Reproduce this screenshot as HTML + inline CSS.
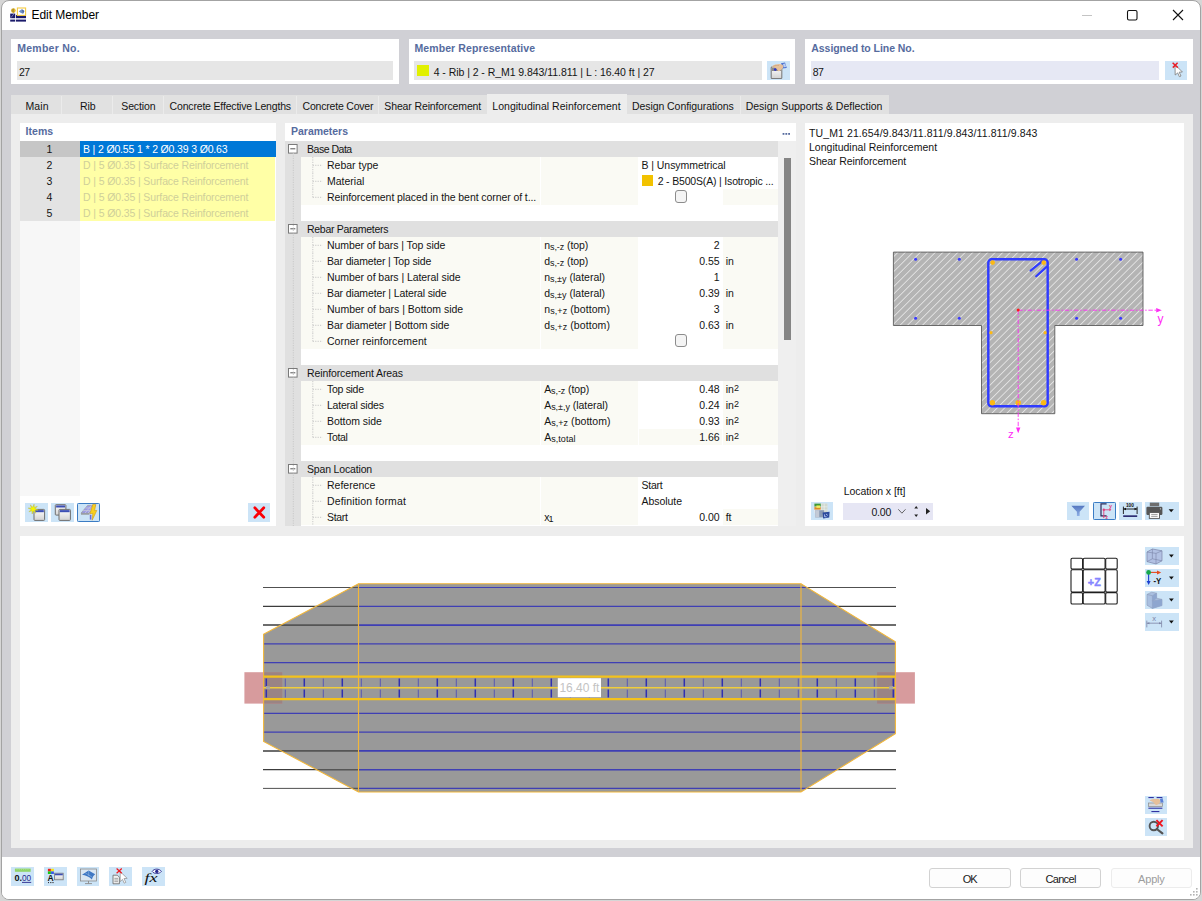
<!DOCTYPE html><html><head><meta charset="utf-8"><title>Edit Member</title><style>
html,body{margin:0;padding:0}
body{width:1202px;height:901px;overflow:hidden;background:#d6d6d6;font-family:"Liberation Sans",sans-serif;position:relative}
#w div,#w span.t,#w svg{position:absolute}
#w{position:absolute;left:1px;top:0;width:1198px;height:898px;border:1px solid #a3a3a3;border-radius:8px;background:#fff;overflow:hidden}
#c{position:absolute;left:-2px;top:-1px;width:1202px;height:901px}
span.t{white-space:pre;display:block}
sub,sup{font-size:9px;line-height:0;position:relative;vertical-align:baseline}
sub{top:1px}
sup{top:-2.5px}
</style></head><body><div id="w"><div id="c"><div style="left:0px;top:30px;width:1202px;height:827px;background:#d0d0d5;"></div><span id="t0" class="t" style="top:6.94px;font-size:12px;line-height:16px;color:#000;letter-spacing:-0.048px;left:31.5px;">Edit Member</span><svg style="left:1075px;top:5px" width="120" height="22" viewBox="1075 5 120 22"><line x1="1082" y1="15.5" x2="1092" y2="15.5" stroke="#c4c4c4" stroke-width="1"/><rect x="1127.5" y="10.5" width="9.5" height="9.5" rx="1.5" fill="none" stroke="#111" stroke-width="1.1"/><path d="M1173 10 L1183 20 M1183 10 L1173 20" stroke="#111" stroke-width="1.1" fill="none"/></svg><div style="left:11px;top:39px;width:387.5px;height:45px;background:#fff;"></div><span id="t1" class="t" style="top:40.36px;font-size:10.5px;line-height:16px;color:#566b9e;font-weight:700;letter-spacing:0.271px;left:17.2px;">Member No.</span><div style="left:17px;top:61.4px;width:376px;height:18.3px;background:#e6e6e6;"></div><span id="t2" class="t" style="top:63.56px;font-size:10.5px;line-height:16px;color:#141414;letter-spacing:-0.494px;left:19px;">27</span><div style="left:408.7px;top:39px;width:386.5px;height:45px;background:#fff;"></div><span id="t3" class="t" style="top:40.36px;font-size:10.5px;line-height:16px;color:#566b9e;font-weight:700;letter-spacing:0.111px;left:414.4px;">Member Representative</span><div style="left:414.2px;top:61.4px;width:348px;height:18.3px;background:#e6e6e6;"></div><div style="left:417.2px;top:65px;width:11.5px;height:11.3px;background:#e1f000;"></div><span id="t4" class="t" style="top:63.56px;font-size:10.5px;line-height:16px;color:#141414;letter-spacing:-0.050px;left:433.7px;">4 - Rib | 2 - R_M1 9.843/11.811 | L : 16.40 ft | 27</span><div style="left:767.2px;top:61.3px;width:22.8px;height:18.5px;background:#cce4f7;"></div><div style="left:805.2px;top:39px;width:388px;height:45px;background:#fff;"></div><span id="t5" class="t" style="top:40.36px;font-size:10.5px;line-height:16px;color:#566b9e;font-weight:700;letter-spacing:-0.061px;left:811.3px;">Assigned to Line No.</span><div style="left:811px;top:61.4px;width:348.2px;height:18.3px;background:#e6e8f4;"></div><span id="t6" class="t" style="top:63.56px;font-size:10.5px;line-height:16px;color:#141414;letter-spacing:-0.444px;left:812.7px;">87</span><div style="left:1164.8px;top:61.3px;width:22.4px;height:18.6px;background:#cce4f7;"></div><div style="left:11px;top:95.3px;width:877.5px;height:19px;background:#e1e1e1;"></div><div style="left:11px;top:114px;width:1181.5px;height:734.3px;background:#ededed;"></div><div style="left:486.5px;top:94px;width:140.3px;height:21px;background:#ededed;"></div><span id="t7" class="t" style="top:97.76px;font-size:10.5px;line-height:16px;color:#141414;letter-spacing:0.109px;left:25.5px;">Main</span><span id="t8" class="t" style="top:97.76px;font-size:10.5px;line-height:16px;color:#141414;letter-spacing:-0.122px;left:80.1px;">Rib</span><span id="t9" class="t" style="top:97.76px;font-size:10.5px;line-height:16px;color:#141414;letter-spacing:-0.133px;left:121.3px;">Section</span><span id="t10" class="t" style="top:97.76px;font-size:10.5px;line-height:16px;color:#141414;letter-spacing:-0.177px;left:169.6px;">Concrete Effective Lengths</span><span id="t11" class="t" style="top:97.76px;font-size:10.5px;line-height:16px;color:#141414;letter-spacing:-0.195px;left:302.5px;">Concrete Cover</span><span id="t12" class="t" style="top:97.76px;font-size:10.5px;line-height:16px;color:#141414;letter-spacing:-0.127px;left:384.3px;">Shear Reinforcement</span><span id="t13" class="t" style="top:97.76px;font-size:10.5px;line-height:16px;color:#141414;letter-spacing:0.021px;left:492.3px;">Longitudinal Reinforcement</span><span id="t14" class="t" style="top:97.76px;font-size:10.5px;line-height:16px;color:#141414;letter-spacing:-0.072px;left:632px;">Design Configurations</span><span id="t15" class="t" style="top:97.76px;font-size:10.5px;line-height:16px;color:#141414;letter-spacing:-0.016px;left:745.7px;">Design Supports &amp; Deflection</span><div style="left:61.3px;top:96px;width:1px;height:18px;background:#ebebeb;"></div><div style="left:111.8px;top:96px;width:1px;height:18px;background:#ebebeb;"></div><div style="left:163.1px;top:96px;width:1px;height:18px;background:#ebebeb;"></div><div style="left:296.4px;top:96px;width:1px;height:18px;background:#ebebeb;"></div><div style="left:377.5px;top:96px;width:1px;height:18px;background:#ebebeb;"></div><div style="left:739.5px;top:96px;width:1px;height:18px;background:#ebebeb;"></div><div style="left:20px;top:122.7px;width:255.5px;height:403.3px;background:#fff;"></div><span id="t16" class="t" style="top:123.36px;font-size:10.5px;line-height:16px;color:#566b9e;font-weight:700;letter-spacing:0.053px;left:25.5px;">Items</span><div style="left:20px;top:141px;width:59.5px;height:354.5px;background:#f7f7f7;"></div><div style="left:20px;top:141px;width:59.5px;height:80px;background:#f2f2f2;"></div><div style="left:80px;top:157px;width:195px;height:64px;background:#ffffd8;"></div><div style="left:20px;top:141px;width:59.5px;height:15.5px;background:#c6c6c6;"></div><span id="t17" class="t" style="top:140.56px;font-size:10.5px;line-height:16px;color:#141414;left:-100.5px;width:300px;text-align:center;">1</span><div style="left:80px;top:141px;width:195.5px;height:15.5px;background:#0078d7;"></div><span id="t18" class="t" style="top:140.66px;font-size:10.5px;line-height:16px;color:#fff;letter-spacing:-0.153px;left:83px;">B | 2 Ø0.55 1 * 2 Ø0.39 3 Ø0.63</span><div style="left:20px;top:157px;width:59.5px;height:15.5px;background:#e3e3e3;"></div><span id="t19" class="t" style="top:156.56px;font-size:10.5px;line-height:16px;color:#141414;left:-100.5px;width:300px;text-align:center;">2</span><div style="left:80px;top:157px;width:194.5px;height:15.5px;background:#ffffa6;"></div><span id="t20" class="t" style="top:156.66px;font-size:10.5px;line-height:16px;color:#cfcf9a;letter-spacing:-0.122px;left:83px;">D | 5 Ø0.35 | Surface Reinforcement</span><div style="left:20px;top:173px;width:59.5px;height:15.5px;background:#e3e3e3;"></div><span id="t21" class="t" style="top:172.56px;font-size:10.5px;line-height:16px;color:#141414;left:-100.5px;width:300px;text-align:center;">3</span><div style="left:80px;top:173px;width:194.5px;height:15.5px;background:#ffffa6;"></div><span id="t22" class="t" style="top:172.66px;font-size:10.5px;line-height:16px;color:#cfcf9a;letter-spacing:-0.122px;left:83px;">D | 5 Ø0.35 | Surface Reinforcement</span><div style="left:20px;top:189px;width:59.5px;height:15.5px;background:#e3e3e3;"></div><span id="t23" class="t" style="top:188.56px;font-size:10.5px;line-height:16px;color:#141414;left:-100.5px;width:300px;text-align:center;">4</span><div style="left:80px;top:189px;width:194.5px;height:15.5px;background:#ffffa6;"></div><span id="t24" class="t" style="top:188.66px;font-size:10.5px;line-height:16px;color:#cfcf9a;letter-spacing:-0.122px;left:83px;">D | 5 Ø0.35 | Surface Reinforcement</span><div style="left:20px;top:205px;width:59.5px;height:15.5px;background:#e3e3e3;"></div><span id="t25" class="t" style="top:204.56px;font-size:10.5px;line-height:16px;color:#141414;left:-100.5px;width:300px;text-align:center;">5</span><div style="left:80px;top:205px;width:194.5px;height:15.5px;background:#ffffa6;"></div><span id="t26" class="t" style="top:204.66px;font-size:10.5px;line-height:16px;color:#cfcf9a;letter-spacing:-0.122px;left:83px;">D | 5 Ø0.35 | Surface Reinforcement</span><div style="left:25px;top:503px;width:23px;height:18.8px;background:#cce4f7;"></div><div style="left:51.2px;top:503px;width:23px;height:18.8px;background:#cce4f7;"></div><div style="left:77px;top:503px;width:23px;height:18.8px;background:#cce4f7;"></div><div style="left:77px;top:503px;width:23px;height:18.8px;background:none;box-sizing:border-box;border:1px solid #3b7cc4;border-radius:1.5px"></div><div style="left:247.5px;top:503px;width:22.6px;height:18.8px;background:#cce4f7;"></div><div style="left:285.3px;top:122.7px;width:510.3px;height:403.3px;background:#fff;"></div><span id="t27" class="t" style="top:123.36px;font-size:10.5px;line-height:16px;color:#566b9e;font-weight:700;letter-spacing:-0.032px;left:291.1px;">Parameters</span><div style="left:285.3px;top:141px;width:16px;height:385px;background:#e0e0e0;"></div><div style="left:778.2px;top:141px;width:17.4px;height:385px;background:#efefef;"></div><div style="left:783.6px;top:158px;width:7.6px;height:182px;background:#858585;"></div><svg style="left:782px;top:131px" width="10" height="5"><g fill="#566b9e"><rect x="0.6" y="2" width="1.8" height="1.8"/><rect x="3.4" y="2" width="1.8" height="1.8"/><rect x="6.2" y="2" width="1.8" height="1.8"/></g></svg><div style="left:285.3px;top:141px;width:492.90000000000003px;height:15.7px;background:#e0e0e0;"></div><svg style="left:288px;top:144px" width="11" height="11"><rect x="0.5" y="0.5" width="8.6" height="8.6" fill="#fff" stroke="#7a7a7a"/><line x1="2.3" y1="4.8" x2="7.3" y2="4.8" stroke="#555" stroke-width="1"/></svg><span id="t28" class="t" style="top:141.36px;font-size:10.5px;line-height:16px;color:#141414;letter-spacing:-0.481px;left:307px;">Base Data</span><div style="left:301.2px;top:157px;width:239.20000000000002px;height:15.7px;background:#fafaf4;"></div><div style="left:541px;top:157px;width:97.00000000000003px;height:15.7px;background:#fafaf4;"></div><div style="left:638.6px;top:157px;width:139.60000000000002px;height:15.7px;background:#fff;"></div><svg style="left:311px;top:157px" width="13" height="16"><path d="M1.8 0 V16 M1.8 8.3 H11.5" stroke="#c9c9c9" stroke-width="1" stroke-dasharray="1.2 1.2" fill="none"/></svg><span id="t29" class="t" style="top:157.36px;font-size:10.5px;line-height:16px;color:#141414;left:327px;">Rebar type</span><span id="t30" class="t" style="top:157.36px;font-size:10.5px;line-height:16px;color:#141414;letter-spacing:-0.059px;left:641.5px;">B | Unsymmetrical</span><div style="left:301.2px;top:173px;width:239.20000000000002px;height:15.7px;background:#fafaf4;"></div><div style="left:541px;top:173px;width:97.00000000000003px;height:15.7px;background:#fafaf4;"></div><div style="left:638.6px;top:173px;width:139.60000000000002px;height:15.7px;background:#fff;"></div><svg style="left:311px;top:173px" width="13" height="16"><path d="M1.8 0 V16 M1.8 8.3 H11.5" stroke="#c9c9c9" stroke-width="1" stroke-dasharray="1.2 1.2" fill="none"/></svg><span id="t31" class="t" style="top:173.36px;font-size:10.5px;line-height:16px;color:#141414;left:327px;">Material</span><span id="t32" class="t" style="top:173.36px;font-size:10.5px;line-height:16px;color:#141414;letter-spacing:-0.172px;left:657.7px;">2 - B500S(A) | Isotropic ...</span><div style="left:641.6px;top:175px;width:11px;height:11px;background:#f2c200;"></div><div style="left:301.2px;top:189px;width:239.20000000000002px;height:15.7px;background:#fafaf4;"></div><div style="left:541px;top:189px;width:97.00000000000003px;height:15.7px;background:#fafaf4;"></div><div style="left:638.6px;top:189px;width:83.4px;height:15.7px;background:#fff;"></div><div style="left:722.6px;top:189px;width:55.60000000000002px;height:15.7px;background:#fafaf4;"></div><svg style="left:311px;top:189px" width="13" height="16"><path d="M1.8 0 V8.3 M1.8 8.3 H11.5" stroke="#c9c9c9" stroke-width="1" stroke-dasharray="1.2 1.2" fill="none"/></svg><span id="t33" class="t" style="top:189.36px;font-size:10.5px;line-height:16px;color:#141414;letter-spacing:-0.082px;left:327px;">Reinforcement placed in the bent corner of t...</span><div style="left:674.6px;top:190.2px;width:12.8px;height:12.8px;background:#f4f4f4;box-sizing:border-box;border:1px solid #8c8c8c;border-radius:3px"></div><div style="left:285.3px;top:221px;width:492.90000000000003px;height:15.7px;background:#e0e0e0;"></div><svg style="left:288px;top:224px" width="11" height="11"><rect x="0.5" y="0.5" width="8.6" height="8.6" fill="#fff" stroke="#7a7a7a"/><line x1="2.3" y1="4.8" x2="7.3" y2="4.8" stroke="#555" stroke-width="1"/></svg><span id="t34" class="t" style="top:221.36px;font-size:10.5px;line-height:16px;color:#141414;letter-spacing:-0.287px;left:307px;">Rebar Parameters</span><div style="left:301.2px;top:237px;width:239.20000000000002px;height:15.7px;background:#fafaf4;"></div><div style="left:541px;top:237px;width:97.00000000000003px;height:15.7px;background:#fafaf4;"></div><div style="left:638.6px;top:237px;width:83.4px;height:15.7px;background:#fff;"></div><div style="left:722.6px;top:237px;width:55.60000000000002px;height:15.7px;background:#fafaf4;"></div><svg style="left:311px;top:237px" width="13" height="16"><path d="M1.8 0 V16 M1.8 8.3 H11.5" stroke="#c9c9c9" stroke-width="1" stroke-dasharray="1.2 1.2" fill="none"/></svg><span id="t35" class="t" style="top:237.36px;font-size:10.5px;line-height:16px;color:#141414;letter-spacing:-0.066px;left:327px;">Number of bars | Top side</span><span id="t36" class="t" style="top:237.36px;font-size:10.5px;line-height:16px;color:#141414;letter-spacing:-0.078px;left:544.2px;">n<sub>s,-z</sub> (top)</span><span id="t37" class="t" style="top:237.36px;font-size:10.5px;line-height:16px;color:#141414;right:482.40px;">2</span><div style="left:301.2px;top:253px;width:239.20000000000002px;height:15.7px;background:#fafaf4;"></div><div style="left:541px;top:253px;width:97.00000000000003px;height:15.7px;background:#fafaf4;"></div><div style="left:638.6px;top:253px;width:83.4px;height:15.7px;background:#fff;"></div><div style="left:722.6px;top:253px;width:55.60000000000002px;height:15.7px;background:#fafaf4;"></div><svg style="left:311px;top:253px" width="13" height="16"><path d="M1.8 0 V16 M1.8 8.3 H11.5" stroke="#c9c9c9" stroke-width="1" stroke-dasharray="1.2 1.2" fill="none"/></svg><span id="t38" class="t" style="top:253.36px;font-size:10.5px;line-height:16px;color:#141414;letter-spacing:-0.148px;left:327px;">Bar diameter | Top side</span><span id="t39" class="t" style="top:253.36px;font-size:10.5px;line-height:16px;color:#141414;letter-spacing:-0.078px;left:544.2px;">d<sub>s,-z</sub> (top)</span><span id="t40" class="t" style="top:253.36px;font-size:10.5px;line-height:16px;color:#141414;right:482.40px;">0.55</span><span id="t41" class="t" style="top:253.36px;font-size:10.5px;line-height:16px;color:#141414;left:725.7px;">in</span><div style="left:301.2px;top:269px;width:239.20000000000002px;height:15.7px;background:#fafaf4;"></div><div style="left:541px;top:269px;width:97.00000000000003px;height:15.7px;background:#fafaf4;"></div><div style="left:638.6px;top:269px;width:83.4px;height:15.7px;background:#fff;"></div><div style="left:722.6px;top:269px;width:55.60000000000002px;height:15.7px;background:#fafaf4;"></div><svg style="left:311px;top:269px" width="13" height="16"><path d="M1.8 0 V16 M1.8 8.3 H11.5" stroke="#c9c9c9" stroke-width="1" stroke-dasharray="1.2 1.2" fill="none"/></svg><span id="t42" class="t" style="top:269.36px;font-size:10.5px;line-height:16px;color:#141414;letter-spacing:-0.059px;left:327px;">Number of bars | Lateral side</span><span id="t43" class="t" style="top:269.36px;font-size:10.5px;line-height:16px;color:#141414;letter-spacing:0.006px;left:544.2px;">n<sub>s,±y</sub> (lateral)</span><span id="t44" class="t" style="top:269.36px;font-size:10.5px;line-height:16px;color:#141414;right:482.40px;">1</span><div style="left:301.2px;top:285px;width:239.20000000000002px;height:15.7px;background:#fafaf4;"></div><div style="left:541px;top:285px;width:97.00000000000003px;height:15.7px;background:#fafaf4;"></div><div style="left:638.6px;top:285px;width:83.4px;height:15.7px;background:#fff;"></div><div style="left:722.6px;top:285px;width:55.60000000000002px;height:15.7px;background:#fafaf4;"></div><svg style="left:311px;top:285px" width="13" height="16"><path d="M1.8 0 V16 M1.8 8.3 H11.5" stroke="#c9c9c9" stroke-width="1" stroke-dasharray="1.2 1.2" fill="none"/></svg><span id="t45" class="t" style="top:285.36px;font-size:10.5px;line-height:16px;color:#141414;letter-spacing:-0.128px;left:327px;">Bar diameter | Lateral side</span><span id="t46" class="t" style="top:285.36px;font-size:10.5px;line-height:16px;color:#141414;letter-spacing:0.006px;left:544.2px;">d<sub>s,±y</sub> (lateral)</span><span id="t47" class="t" style="top:285.36px;font-size:10.5px;line-height:16px;color:#141414;right:482.40px;">0.39</span><span id="t48" class="t" style="top:285.36px;font-size:10.5px;line-height:16px;color:#141414;left:725.7px;">in</span><div style="left:301.2px;top:301px;width:239.20000000000002px;height:15.7px;background:#fafaf4;"></div><div style="left:541px;top:301px;width:97.00000000000003px;height:15.7px;background:#fafaf4;"></div><div style="left:638.6px;top:301px;width:83.4px;height:15.7px;background:#fff;"></div><div style="left:722.6px;top:301px;width:55.60000000000002px;height:15.7px;background:#fafaf4;"></div><svg style="left:311px;top:301px" width="13" height="16"><path d="M1.8 0 V16 M1.8 8.3 H11.5" stroke="#c9c9c9" stroke-width="1" stroke-dasharray="1.2 1.2" fill="none"/></svg><span id="t49" class="t" style="top:301.36px;font-size:10.5px;line-height:16px;color:#141414;letter-spacing:-0.006px;left:327px;">Number of bars | Bottom side</span><span id="t50" class="t" style="top:301.36px;font-size:10.5px;line-height:16px;color:#141414;letter-spacing:0.084px;left:544.2px;">n<sub>s,+z</sub> (bottom)</span><span id="t51" class="t" style="top:301.36px;font-size:10.5px;line-height:16px;color:#141414;right:482.40px;">3</span><div style="left:301.2px;top:317px;width:239.20000000000002px;height:15.7px;background:#fafaf4;"></div><div style="left:541px;top:317px;width:97.00000000000003px;height:15.7px;background:#fafaf4;"></div><div style="left:638.6px;top:317px;width:83.4px;height:15.7px;background:#fff;"></div><div style="left:722.6px;top:317px;width:55.60000000000002px;height:15.7px;background:#fafaf4;"></div><svg style="left:311px;top:317px" width="13" height="16"><path d="M1.8 0 V16 M1.8 8.3 H11.5" stroke="#c9c9c9" stroke-width="1" stroke-dasharray="1.2 1.2" fill="none"/></svg><span id="t52" class="t" style="top:317.36px;font-size:10.5px;line-height:16px;color:#141414;letter-spacing:-0.074px;left:327px;">Bar diameter | Bottom side</span><span id="t53" class="t" style="top:317.36px;font-size:10.5px;line-height:16px;color:#141414;letter-spacing:0.084px;left:544.2px;">d<sub>s,+z</sub> (bottom)</span><span id="t54" class="t" style="top:317.36px;font-size:10.5px;line-height:16px;color:#141414;right:482.40px;">0.63</span><span id="t55" class="t" style="top:317.36px;font-size:10.5px;line-height:16px;color:#141414;left:725.7px;">in</span><div style="left:301.2px;top:333px;width:239.20000000000002px;height:15.7px;background:#fafaf4;"></div><div style="left:541px;top:333px;width:97.00000000000003px;height:15.7px;background:#fafaf4;"></div><div style="left:638.6px;top:333px;width:83.4px;height:15.7px;background:#fff;"></div><div style="left:722.6px;top:333px;width:55.60000000000002px;height:15.7px;background:#fafaf4;"></div><svg style="left:311px;top:333px" width="13" height="16"><path d="M1.8 0 V8.3 M1.8 8.3 H11.5" stroke="#c9c9c9" stroke-width="1" stroke-dasharray="1.2 1.2" fill="none"/></svg><span id="t56" class="t" style="top:333.36px;font-size:10.5px;line-height:16px;color:#141414;letter-spacing:0.024px;left:327px;">Corner reinforcement</span><div style="left:674.6px;top:334.2px;width:12.8px;height:12.8px;background:#f4f4f4;box-sizing:border-box;border:1px solid #8c8c8c;border-radius:3px"></div><div style="left:285.3px;top:365px;width:492.90000000000003px;height:15.7px;background:#e0e0e0;"></div><svg style="left:288px;top:368px" width="11" height="11"><rect x="0.5" y="0.5" width="8.6" height="8.6" fill="#fff" stroke="#7a7a7a"/><line x1="2.3" y1="4.8" x2="7.3" y2="4.8" stroke="#555" stroke-width="1"/></svg><span id="t57" class="t" style="top:365.36px;font-size:10.5px;line-height:16px;color:#141414;letter-spacing:-0.109px;left:307px;">Reinforcement Areas</span><div style="left:301.2px;top:381px;width:239.20000000000002px;height:15.7px;background:#fafaf4;"></div><div style="left:541px;top:381px;width:97.00000000000003px;height:15.7px;background:#fafaf4;"></div><div style="left:638.6px;top:381px;width:83.4px;height:15.7px;background:#fff;"></div><div style="left:722.6px;top:381px;width:55.60000000000002px;height:15.7px;background:#fafaf4;"></div><svg style="left:311px;top:381px" width="13" height="16"><path d="M1.8 0 V16 M1.8 8.3 H11.5" stroke="#c9c9c9" stroke-width="1" stroke-dasharray="1.2 1.2" fill="none"/></svg><span id="t58" class="t" style="top:381.36px;font-size:10.5px;line-height:16px;color:#141414;letter-spacing:-0.301px;left:327px;">Top side</span><span id="t59" class="t" style="top:381.36px;font-size:10.5px;line-height:16px;color:#141414;letter-spacing:-0.094px;left:544.2px;">A<sub>s,-z</sub> (top)</span><span id="t60" class="t" style="top:381.36px;font-size:10.5px;line-height:16px;color:#141414;right:482.40px;">0.48</span><span id="t61" class="t" style="top:381.36px;font-size:10.5px;line-height:16px;color:#141414;left:725.7px;">in<sup>2</sup></span><div style="left:301.2px;top:397px;width:239.20000000000002px;height:15.7px;background:#fafaf4;"></div><div style="left:541px;top:397px;width:97.00000000000003px;height:15.7px;background:#fafaf4;"></div><div style="left:638.6px;top:397px;width:83.4px;height:15.7px;background:#fff;"></div><div style="left:722.6px;top:397px;width:55.60000000000002px;height:15.7px;background:#fafaf4;"></div><svg style="left:311px;top:397px" width="13" height="16"><path d="M1.8 0 V16 M1.8 8.3 H11.5" stroke="#c9c9c9" stroke-width="1" stroke-dasharray="1.2 1.2" fill="none"/></svg><span id="t62" class="t" style="top:397.36px;font-size:10.5px;line-height:16px;color:#141414;letter-spacing:-0.219px;left:327px;">Lateral sides</span><span id="t63" class="t" style="top:397.36px;font-size:10.5px;line-height:16px;color:#141414;letter-spacing:-0.043px;left:544.2px;">A<sub>s,±,y</sub> (lateral)</span><span id="t64" class="t" style="top:397.36px;font-size:10.5px;line-height:16px;color:#141414;right:482.40px;">0.24</span><span id="t65" class="t" style="top:397.36px;font-size:10.5px;line-height:16px;color:#141414;left:725.7px;">in<sup>2</sup></span><div style="left:301.2px;top:413px;width:239.20000000000002px;height:15.7px;background:#fafaf4;"></div><div style="left:541px;top:413px;width:97.00000000000003px;height:15.7px;background:#fafaf4;"></div><div style="left:638.6px;top:413px;width:83.4px;height:15.7px;background:#fff;"></div><div style="left:722.6px;top:413px;width:55.60000000000002px;height:15.7px;background:#fafaf4;"></div><svg style="left:311px;top:413px" width="13" height="16"><path d="M1.8 0 V16 M1.8 8.3 H11.5" stroke="#c9c9c9" stroke-width="1" stroke-dasharray="1.2 1.2" fill="none"/></svg><span id="t66" class="t" style="top:413.36px;font-size:10.5px;line-height:16px;color:#141414;letter-spacing:-0.068px;left:327px;">Bottom side</span><span id="t67" class="t" style="top:413.36px;font-size:10.5px;line-height:16px;color:#141414;letter-spacing:0.036px;left:544.2px;">A<sub>s,+z</sub> (bottom)</span><span id="t68" class="t" style="top:413.36px;font-size:10.5px;line-height:16px;color:#141414;right:482.40px;">0.93</span><span id="t69" class="t" style="top:413.36px;font-size:10.5px;line-height:16px;color:#141414;left:725.7px;">in<sup>2</sup></span><div style="left:301.2px;top:429px;width:239.20000000000002px;height:15.7px;background:#fafaf4;"></div><div style="left:541px;top:429px;width:97.00000000000003px;height:15.7px;background:#fafaf4;"></div><div style="left:638.6px;top:429px;width:83.4px;height:15.7px;background:#fafaf4;"></div><div style="left:722.6px;top:429px;width:55.60000000000002px;height:15.7px;background:#fafaf4;"></div><svg style="left:311px;top:429px" width="13" height="16"><path d="M1.8 0 V8.3 M1.8 8.3 H11.5" stroke="#c9c9c9" stroke-width="1" stroke-dasharray="1.2 1.2" fill="none"/></svg><span id="t70" class="t" style="top:429.36px;font-size:10.5px;line-height:16px;color:#141414;letter-spacing:-0.338px;left:327px;">Total</span><span id="t71" class="t" style="top:429.36px;font-size:10.5px;line-height:16px;color:#141414;letter-spacing:0.034px;left:544.2px;">A<sub>s,total</sub></span><span id="t72" class="t" style="top:429.36px;font-size:10.5px;line-height:16px;color:#141414;right:482.40px;">1.66</span><span id="t73" class="t" style="top:429.36px;font-size:10.5px;line-height:16px;color:#141414;left:725.7px;">in<sup>2</sup></span><div style="left:285.3px;top:461px;width:492.90000000000003px;height:15.7px;background:#e0e0e0;"></div><svg style="left:288px;top:464px" width="11" height="11"><rect x="0.5" y="0.5" width="8.6" height="8.6" fill="#fff" stroke="#7a7a7a"/><line x1="2.3" y1="4.8" x2="7.3" y2="4.8" stroke="#555" stroke-width="1"/></svg><span id="t74" class="t" style="top:461.36px;font-size:10.5px;line-height:16px;color:#141414;letter-spacing:-0.165px;left:307px;">Span Location</span><div style="left:301.2px;top:477px;width:239.20000000000002px;height:15.7px;background:#fafaf4;"></div><div style="left:541px;top:477px;width:97.00000000000003px;height:15.7px;background:#fafaf4;"></div><div style="left:638.6px;top:477px;width:139.60000000000002px;height:15.7px;background:#fff;"></div><svg style="left:311px;top:477px" width="13" height="16"><path d="M1.8 0 V16 M1.8 8.3 H11.5" stroke="#c9c9c9" stroke-width="1" stroke-dasharray="1.2 1.2" fill="none"/></svg><span id="t75" class="t" style="top:477.36px;font-size:10.5px;line-height:16px;color:#141414;left:327px;">Reference</span><span id="t76" class="t" style="top:477.36px;font-size:10.5px;line-height:16px;color:#141414;letter-spacing:-0.237px;left:641.5px;">Start</span><div style="left:301.2px;top:493px;width:239.20000000000002px;height:15.7px;background:#fafaf4;"></div><div style="left:541px;top:493px;width:97.00000000000003px;height:15.7px;background:#fafaf4;"></div><div style="left:638.6px;top:493px;width:139.60000000000002px;height:15.7px;background:#fff;"></div><svg style="left:311px;top:493px" width="13" height="16"><path d="M1.8 0 V16 M1.8 8.3 H11.5" stroke="#c9c9c9" stroke-width="1" stroke-dasharray="1.2 1.2" fill="none"/></svg><span id="t77" class="t" style="top:493.36px;font-size:10.5px;line-height:16px;color:#141414;letter-spacing:0.150px;left:327px;">Definition format</span><span id="t78" class="t" style="top:493.36px;font-size:10.5px;line-height:16px;color:#141414;letter-spacing:-0.047px;left:641.5px;">Absolute</span><div style="left:301.2px;top:509px;width:239.20000000000002px;height:15.7px;background:#fafaf4;"></div><div style="left:541px;top:509px;width:97.00000000000003px;height:15.7px;background:#fafaf4;"></div><div style="left:638.6px;top:509px;width:83.4px;height:15.7px;background:#fff;"></div><div style="left:722.6px;top:509px;width:55.60000000000002px;height:15.7px;background:#fafaf4;"></div><svg style="left:311px;top:509px" width="13" height="16"><path d="M1.8 0 V16 M1.8 8.3 H11.5" stroke="#c9c9c9" stroke-width="1" stroke-dasharray="1.2 1.2" fill="none"/></svg><span id="t79" class="t" style="top:509.36px;font-size:10.5px;line-height:16px;color:#141414;letter-spacing:-0.338px;left:327px;">Start</span><span id="t80" class="t" style="top:509.36px;font-size:10.5px;line-height:16px;color:#141414;letter-spacing:-0.983px;left:544.2px;">x<sub>1</sub></span><span id="t81" class="t" style="top:509.36px;font-size:10.5px;line-height:16px;color:#141414;right:482.40px;">0.00</span><span id="t82" class="t" style="top:509.36px;font-size:10.5px;line-height:16px;color:#141414;left:725.7px;">ft</span><svg style="left:292px;top:153px" width="3" height="373"><path d="M1.3 0 V373" stroke="#c9c9c9" stroke-width="1" stroke-dasharray="1.2 1.2" fill="none"/></svg><div style="left:805.2px;top:122.7px;width:379.2px;height:403.3px;background:#fff;"></div><span id="t83" class="t" style="top:125.06px;font-size:10.5px;line-height:16px;color:#141414;letter-spacing:0.103px;left:809px;">TU_M1 21.654/9.843/11.811/9.843/11.811/9.843</span><span id="t84" class="t" style="top:139.16px;font-size:10.5px;line-height:16px;color:#141414;letter-spacing:0.010px;left:809px;">Longitudinal Reinforcement</span><span id="t85" class="t" style="top:153.16px;font-size:10.5px;line-height:16px;color:#141414;letter-spacing:-0.117px;left:809px;">Shear Reinforcement</span><svg style="left:880px;top:240px" width="300" height="210" viewBox="880 240 300 210"><defs><pattern id="hat" patternUnits="userSpaceOnUse" width="5.3" height="5.3" patternTransform="rotate(-45 893 252)"><rect width="5.3" height="5.3" fill="#b4b4b4"/><rect y="0.9" width="5.3" height="0.85" fill="#e6e6e6"/></pattern></defs><polygon points="893.4,252.1 1143,252.1 1143,325.5 1054.8,325.5 1054.8,413.7 981.5,413.7 981.5,325.5 893.4,325.5" fill="url(#hat)" stroke="#5c5c5c" stroke-width="0.9"/><circle cx="915.6" cy="259.3" r="1.5" fill="#3a3aff"/><circle cx="915.6" cy="318.2" r="1.5" fill="#3a3aff"/><circle cx="959.3" cy="259.3" r="1.5" fill="#3a3aff"/><circle cx="959.3" cy="318.2" r="1.5" fill="#3a3aff"/><circle cx="1076.6" cy="259.3" r="1.5" fill="#3a3aff"/><circle cx="1076.6" cy="318.2" r="1.5" fill="#3a3aff"/><circle cx="1120.6" cy="259.3" r="1.5" fill="#3a3aff"/><circle cx="1120.6" cy="318.2" r="1.5" fill="#3a3aff"/><rect x="988.3" y="259.3" width="59.4" height="147" rx="3.2" fill="none" stroke="#2f3bff" stroke-width="2.4"/><path d="M1030.6 270.6 L1043.6 260.2 M1036.2 276.2 L1046.9 266.6" stroke="#2f3bff" stroke-width="2.2" stroke-linecap="round" fill="none"/><circle cx="992.7" cy="262.6" r="2.3" fill="#fdb913"/><circle cx="1043.7" cy="262.6" r="2.3" fill="#fdb913"/><circle cx="991" cy="332.7" r="1.6" fill="#fdb913"/><circle cx="1045.1" cy="332.7" r="1.6" fill="#fdb913"/><circle cx="992.4" cy="402.7" r="2.7" fill="#fdb913"/><circle cx="1018.2" cy="402.7" r="2.7" fill="#fdb913"/><circle cx="1043.6" cy="402.7" r="2.7" fill="#fdb913"/><path d="M1018.2 310.2 H1156.5 M1018.2 310.2 V428" stroke="#ff2cf5" stroke-width="0.9" stroke-dasharray="4.4 1.7 1.5 1.7" fill="none"/><path d="M1156.2 307.9 L1161.8 310.2 L1156.2 312.5Z M1016.0 427.5 L1018.2 433.2 L1020.4000000000001 427.5Z" fill="#ff2cf5"/><circle cx="1018.2" cy="310" r="1.5" fill="#ff1a1a"/><text x="1157.6" y="322.6" font-size="12" fill="#ff2cf5" font-family="Liberation Sans, sans-serif">y</text><text x="1008" y="437.5" font-size="11.5" fill="#ff2cf5" font-family="Liberation Sans, sans-serif">z</text></svg><span id="t86" class="t" style="top:483.36px;font-size:10.5px;line-height:16px;color:#141414;letter-spacing:-0.050px;left:843.7px;">Location x [ft]</span><div style="left:811px;top:502px;width:22px;height:18px;background:#cce4f7;"></div><div style="left:843.3px;top:502.5px;width:89.8px;height:17.7px;background:#e6e6f4;"></div><span id="t87" class="t" style="top:503.86px;font-size:10.5px;line-height:16px;color:#141414;letter-spacing:-0.234px;left:871.5px;">0.00</span><svg style="left:895px;top:503px" width="40" height="17" viewBox="895 503 40 17"><path d="M898.3 509.3 L901.9 513.2 L905.5 509.3" fill="none" stroke="#555" stroke-width="0.9"/><path d="M914.3 508.6 L916.2 506 L918.1 508.6Z M914.3 514.4 L916.2 517 L918.1 514.4Z M926 508 L930.2 511.2 L926 514.4Z" fill="#222"/></svg><div style="left:1067px;top:502.1px;width:22px;height:18px;background:#cce4f7;"></div><div style="left:1092.8px;top:502.1px;width:22.8px;height:18px;background:#cce4f7;"></div><div style="left:1119px;top:502.1px;width:22.5px;height:18px;background:#cce4f7;"></div><div style="left:1145px;top:502.1px;width:34px;height:18px;background:#cce4f7;"></div><div style="left:1092.8px;top:502.1px;width:22.8px;height:18px;background:none;box-sizing:border-box;border:1px solid #3b7cc4;border-radius:1.5px"></div><div style="left:20px;top:535.8px;width:1164.3px;height:304.5px;background:#fff;"></div><svg style="left:230px;top:570px" width="700" height="240" viewBox="230 570 700 240"><defs><clipPath id="bp"><polygon points="263.6,634.3 358.5,583.8 801,583.8 895.4,641.8 895.4,733.8 801,792 358.5,792 263.6,741.4"/></clipPath></defs><line x1="263" y1="587.5" x2="896" y2="587.5" stroke="#3c3c3c" stroke-width="0.9"/><line x1="263" y1="606.4" x2="896" y2="606.4" stroke="#3c3c3c" stroke-width="1.2"/><line x1="263" y1="625.1" x2="896" y2="625.1" stroke="#3c3c3c" stroke-width="1.5"/><line x1="263" y1="750.9" x2="896" y2="750.9" stroke="#3c3c3c" stroke-width="1.5"/><line x1="263" y1="769.7" x2="896" y2="769.7" stroke="#3c3c3c" stroke-width="1.2"/><line x1="263" y1="788.4" x2="896" y2="788.4" stroke="#3c3c3c" stroke-width="0.9"/><polygon points="263.6,634.3 358.5,583.8 801,583.8 895.4,641.8 895.4,733.8 801,792 358.5,792 263.6,741.4" fill="#999999"/><g clip-path="url(#bp)"><line x1="263" y1="587.5" x2="358.5" y2="587.5" stroke="#555" stroke-width="1.1"/><line x1="358.5" y1="587.5" x2="896" y2="587.5" stroke="#3f3fb4" stroke-width="1.1"/><line x1="263" y1="606.4" x2="358.5" y2="606.4" stroke="#555" stroke-width="1.4"/><line x1="358.5" y1="606.4" x2="896" y2="606.4" stroke="#3f3fb4" stroke-width="1.4"/><line x1="263" y1="625.1" x2="358.5" y2="625.1" stroke="#555" stroke-width="1.7"/><line x1="358.5" y1="625.1" x2="896" y2="625.1" stroke="#3f3fb4" stroke-width="1.7"/><line x1="263" y1="643.8" x2="896" y2="643.8" stroke="#3f3fb4" stroke-width="1.3"/><line x1="263" y1="662.6" x2="896" y2="662.6" stroke="#3f3fb4" stroke-width="1.1"/><line x1="263" y1="713.4" x2="896" y2="713.4" stroke="#3f3fb4" stroke-width="1.1"/><line x1="263" y1="732.2" x2="896" y2="732.2" stroke="#3f3fb4" stroke-width="1.3"/><line x1="263" y1="750.9" x2="358.5" y2="750.9" stroke="#555" stroke-width="1.7"/><line x1="358.5" y1="750.9" x2="896" y2="750.9" stroke="#3f3fb4" stroke-width="1.7"/><line x1="263" y1="769.7" x2="358.5" y2="769.7" stroke="#555" stroke-width="1.4"/><line x1="358.5" y1="769.7" x2="896" y2="769.7" stroke="#3f3fb4" stroke-width="1.4"/><line x1="263" y1="788.4" x2="358.5" y2="788.4" stroke="#555" stroke-width="1.1"/><line x1="358.5" y1="788.4" x2="896" y2="788.4" stroke="#3f3fb4" stroke-width="1.1"/></g><rect x="244.4" y="672.2" width="37.8" height="31.4" fill="#d08a8c" fill-opacity="0.85"/><rect x="877.1" y="672.2" width="37.8" height="31.4" fill="#d08a8c" fill-opacity="0.85"/><rect x="263.6" y="672.2" width="18.599999999999966" height="31.4" fill="#9a8484"/><rect x="877.1" y="672.2" width="18.299999999999955" height="31.4" fill="#9a8484"/><polygon points="263.6,634.3 358.5,583.8 801,583.8 895.4,641.8 895.4,733.8 801,792 358.5,792 263.6,741.4" fill="none" stroke="#f2b73a" stroke-width="1.1"/><path d="M358.5 583.8 V792 M801 583.8 V792" stroke="#f2b73a" stroke-width="1.1" fill="none"/><path d="M266.3 678.6 V686.6 M266.3 689.6 V697.6" stroke="#3030b0" stroke-width="1.5" fill="none"/><path d="M285.3 678.6 V686.6 M285.3 689.6 V697.6" stroke="#4848b8" stroke-width="0.8" fill="none"/><path d="M304.3 678.6 V686.6 M304.3 689.6 V697.6" stroke="#3030b0" stroke-width="1.5" fill="none"/><path d="M323.3 678.6 V686.6 M323.3 689.6 V697.6" stroke="#4848b8" stroke-width="0.8" fill="none"/><path d="M342.3 678.6 V686.6 M342.3 689.6 V697.6" stroke="#3030b0" stroke-width="1.5" fill="none"/><path d="M361.3 678.6 V686.6 M361.3 689.6 V697.6" stroke="#4848b8" stroke-width="0.8" fill="none"/><path d="M380.3 678.6 V686.6 M380.3 689.6 V697.6" stroke="#4848b8" stroke-width="0.8" fill="none"/><path d="M399.3 678.6 V686.6 M399.3 689.6 V697.6" stroke="#3030b0" stroke-width="1.5" fill="none"/><path d="M418.3 678.6 V686.6 M418.3 689.6 V697.6" stroke="#4848b8" stroke-width="0.8" fill="none"/><path d="M437.3 678.6 V686.6 M437.3 689.6 V697.6" stroke="#3030b0" stroke-width="1.5" fill="none"/><path d="M456.3 678.6 V686.6 M456.3 689.6 V697.6" stroke="#4848b8" stroke-width="0.8" fill="none"/><path d="M475.3 678.6 V686.6 M475.3 689.6 V697.6" stroke="#3030b0" stroke-width="1.5" fill="none"/><path d="M494.3 678.6 V686.6 M494.3 689.6 V697.6" stroke="#4848b8" stroke-width="0.8" fill="none"/><path d="M513.3 678.6 V686.6 M513.3 689.6 V697.6" stroke="#3030b0" stroke-width="1.5" fill="none"/><path d="M532.3 678.6 V686.6 M532.3 689.6 V697.6" stroke="#4848b8" stroke-width="0.8" fill="none"/><path d="M551.3 678.6 V686.6 M551.3 689.6 V697.6" stroke="#3030b0" stroke-width="1.5" fill="none"/><path d="M570.3 678.6 V686.6 M570.3 689.6 V697.6" stroke="#4848b8" stroke-width="0.8" fill="none"/><path d="M589.3 678.6 V686.6 M589.3 689.6 V697.6" stroke="#4848b8" stroke-width="0.8" fill="none"/><path d="M608.3 678.6 V686.6 M608.3 689.6 V697.6" stroke="#3030b0" stroke-width="1.5" fill="none"/><path d="M627.3 678.6 V686.6 M627.3 689.6 V697.6" stroke="#4848b8" stroke-width="0.8" fill="none"/><path d="M646.3 678.6 V686.6 M646.3 689.6 V697.6" stroke="#3030b0" stroke-width="1.5" fill="none"/><path d="M665.3 678.6 V686.6 M665.3 689.6 V697.6" stroke="#4848b8" stroke-width="0.8" fill="none"/><path d="M684.3 678.6 V686.6 M684.3 689.6 V697.6" stroke="#3030b0" stroke-width="1.5" fill="none"/><path d="M703.3 678.6 V686.6 M703.3 689.6 V697.6" stroke="#4848b8" stroke-width="0.8" fill="none"/><path d="M722.3 678.6 V686.6 M722.3 689.6 V697.6" stroke="#3030b0" stroke-width="1.5" fill="none"/><path d="M741.3 678.6 V686.6 M741.3 689.6 V697.6" stroke="#4848b8" stroke-width="0.8" fill="none"/><path d="M760.3 678.6 V686.6 M760.3 689.6 V697.6" stroke="#3030b0" stroke-width="1.5" fill="none"/><path d="M779.3 678.6 V686.6 M779.3 689.6 V697.6" stroke="#4848b8" stroke-width="0.8" fill="none"/><path d="M798.3 678.6 V686.6 M798.3 689.6 V697.6" stroke="#4848b8" stroke-width="0.8" fill="none"/><path d="M817.3 678.6 V686.6 M817.3 689.6 V697.6" stroke="#3030b0" stroke-width="1.5" fill="none"/><path d="M836.3 678.6 V686.6 M836.3 689.6 V697.6" stroke="#4848b8" stroke-width="0.8" fill="none"/><path d="M855.3 678.6 V686.6 M855.3 689.6 V697.6" stroke="#3030b0" stroke-width="1.5" fill="none"/><path d="M874.3 678.6 V686.6 M874.3 689.6 V697.6" stroke="#4848b8" stroke-width="0.8" fill="none"/><path d="M893.3 678.6 V686.6 M893.3 689.6 V697.6" stroke="#3030b0" stroke-width="1.5" fill="none"/><path d="M263.6 676.7 H895.4 M263.6 699.1 H895.4" stroke="#f3c21c" stroke-width="2.2" fill="none"/><path d="M263.6 687.8 H895.4" stroke="#f0cd3a" stroke-width="1.5" fill="none"/><path d="M266 686 L270 686.6 L270 689.4 L266 689Z M889 686.6 L893 686 L893 689 L889 689.4Z" fill="#a5a5a5"/><rect x="557.8" y="678.2" width="43.2" height="19" fill="#fff"/><text x="579.4" y="692.3" text-anchor="middle" font-size="12" fill="#c3c3c3" font-family="Liberation Sans, sans-serif">16.40 ft</text></svg><div style="left:1145px;top:546.5px;width:33.8px;height:18.4px;background:#cce4f7;"></div><div style="left:1145px;top:568.7px;width:33.8px;height:18.4px;background:#cce4f7;"></div><div style="left:1145px;top:590.5px;width:33.8px;height:18.4px;background:#cce4f7;"></div><div style="left:1145px;top:612.5px;width:33.8px;height:18.4px;background:#cce4f7;"></div><div style="left:1145px;top:796px;width:22px;height:18px;background:#cce4f7;"></div><div style="left:1145px;top:818px;width:22px;height:18px;background:#cce4f7;"></div><div style="left:0px;top:856.8px;width:1202px;height:45px;background:#fff;"></div><div style="left:11px;top:867.2px;width:22.8px;height:18.6px;background:#cce4f7;"></div><div style="left:44px;top:867.2px;width:22.8px;height:18.6px;background:#cce4f7;"></div><div style="left:76.7px;top:867.2px;width:22.8px;height:18.6px;background:#cce4f7;"></div><div style="left:109.3px;top:867.2px;width:22.8px;height:18.6px;background:#cce4f7;"></div><div style="left:142.2px;top:867.2px;width:22.8px;height:18.6px;background:#cce4f7;"></div><div style="left:929px;top:867.8px;width:81.5px;height:20.5px;background:#fdfdfd;box-sizing:border-box;border:1px solid #d2d2d2;border-radius:3px"></div><span id="t88" class="t" style="top:871.39px;font-size:11px;line-height:16px;color:#1a1a1a;letter-spacing:-0.903px;left:962.7px;">OK</span><div style="left:1020.4px;top:867.8px;width:80.8px;height:20.5px;background:#fdfdfd;box-sizing:border-box;border:1px solid #d2d2d2;border-radius:3px"></div><span id="t89" class="t" style="top:871.39px;font-size:11px;line-height:16px;color:#1a1a1a;letter-spacing:-0.658px;left:1045.4px;">Cancel</span><div style="left:1110.6px;top:867.8px;width:81px;height:20.5px;background:#fdfdfd;box-sizing:border-box;border:1px solid #ececec;border-radius:3px"></div><span id="t90" class="t" style="top:871.39px;font-size:11px;line-height:16px;color:#9c9c9c;letter-spacing:-0.186px;left:1138.1px;">Apply</span><svg style="left:1188px;top:886px" width="12" height="12"><g fill="#b4b4b4"><rect x="8" y="2" width="1.6" height="1.6"/><rect x="5" y="5" width="1.6" height="1.6"/><rect x="8" y="5" width="1.6" height="1.6"/><rect x="2" y="8" width="1.6" height="1.6"/><rect x="5" y="8" width="1.6" height="1.6"/><rect x="8" y="8" width="1.6" height="1.6"/></g></svg><svg style="left:0px;top:0px" width="1" height="1" viewBox="0 0 1 1"><defs><linearGradient id="wg" x1="0" y1="0" x2="0" y2="1"><stop offset="0" stop-color="#ffffff"/><stop offset="1" stop-color="#d2d2d2"/></linearGradient><linearGradient id="fg" x1="0" y1="0" x2="0" y2="1"><stop offset="0" stop-color="#5577c0"/><stop offset="1" stop-color="#8fb0e6"/></linearGradient></defs></svg><svg style="left:10px;top:7px" width="17" height="16" viewBox="0 0 17 16"><circle cx="3.4" cy="3.6" r="2.3" fill="#e3b62c"/><path d="M3.4 1.6 V5.6 M2.3 2.2 V5" stroke="#8d7a2a" stroke-width="0.6"/><rect x="0.2" y="6.6" width="5" height="4.6" fill="#1a1a6a"/><rect x="6" y="8" width="10" height="3.2" fill="#1a1a6a"/><path d="M1 10.6 L3.8 7" stroke="#8f8fc0" stroke-width="0.8"/><rect x="0.2" y="12.6" width="5" height="2" fill="#1a1a6a"/><rect x="6" y="12.6" width="10" height="2" fill="#1a1a6a"/><rect x="7.4" y="1" width="8.2" height="7.4" fill="#fff" stroke="#f4cb42" stroke-width="1.1"/><path d="M8.8 4.2 L11.8 2.2 L14.4 4 L13 6.8 L10.6 5.8Z" fill="#6f8fc8"/><path d="M11.8 2.2 L14.4 4 L13 6.8Z" fill="#50689c"/></svg><svg style="left:767px;top:61px" width="23" height="19" viewBox="0 0 23 19"><rect x="4.2" y="6" width="10.6" height="11.5" rx="0.8" fill="url(#wg)" stroke="#7c7c7c" stroke-width="1.1"/><rect x="4.8" y="6.6" width="9.4" height="3.4" fill="#8a8a8a"/><circle cx="8.2" cy="8.6" r="1.3" fill="#3036c8"/><path d="M14 2.2 L18 1.4 L19.8 7 L15 7.6Z" fill="#4f74cf"/><path d="M16 3 L18.2 2.6 L19 6 L16.6 6.2Z" fill="#b9cdf2"/><path d="M5 6.2 C5.4 4 8.6 3.2 11 3.2 C13.6 2.8 16 3.4 16.2 5.4 C16.4 7.4 14.4 8.2 13.2 9.6 C12.4 10.6 10.8 10.4 10.4 9 C10 7.4 8.4 6.4 5 6.2Z" fill="#e6c09a"/><path d="M6.2 5.4 C8 4.4 10.4 4.2 12 4.4" stroke="#c39a72" stroke-width="0.6" fill="none"/></svg><svg style="left:1164.8px;top:61.3px" width="23" height="19" viewBox="0 0 23 19"><path d="M10 3.6 L17.4 11 L14.2 11.2 L16 15 L14.4 15.7 L12.7 11.9 L10.2 14Z" fill="#fff" stroke="#7a7a7a" stroke-width="0.8" stroke-linejoin="round"/><path d="M7.6 1.8 L12.8 6.6 M12.6 1.8 L7.8 6.6" stroke="#e8202a" stroke-width="1.5" fill="none"/></svg><svg style="left:25px;top:503px" width="23" height="19" viewBox="0 0 23 19"><rect x="9" y="6.4" width="10.6" height="11" rx="0.8" fill="url(#wg)" stroke="#6e6e6e" stroke-width="1"/><rect x="9.8" y="7.1000000000000005" width="9.0" height="2.1" fill="#3c4fb4"/><polygon points="9.09,1.20 9.22,4.44 12.27,3.34 10.06,5.72 13.00,7.09 9.76,7.22 10.86,10.27 8.48,8.06 7.11,11.00 6.98,7.76 3.93,8.86 6.14,6.48 3.20,5.11 6.44,4.98 5.34,1.93 7.72,4.14" fill="#f6f600" stroke="#b9b94a" stroke-width="0.5"/></svg><svg style="left:51.2px;top:503px" width="23" height="19" viewBox="0 0 23 19"><rect x="4.3" y="1.7" width="10.6" height="10.4" rx="0.8" fill="url(#wg)" stroke="#6e6e6e" stroke-width="1"/><rect x="5.1" y="2.4" width="9.0" height="2.1" fill="#3c4fb4"/><rect x="8" y="6.4" width="11.4" height="11" rx="0.8" fill="url(#wg)" stroke="#6e6e6e" stroke-width="1"/><rect x="8.8" y="7.1000000000000005" width="9.8" height="2.1" fill="#3c4fb4"/></svg><svg style="left:77px;top:503px" width="23" height="19" viewBox="0 0 23 19"><path d="M4 10.2 L10.6 2.4 L18.6 2.4 L12.4 10.2Z" fill="#9a9ae8" stroke="#9a9a9a" stroke-width="0.7"/><path d="M6.2 7.6 H14.4 M8.4 5 H16.6 M8 10.2 L14.4 2.4 M11 10.2 L17 2.4" stroke="#c9c9d8" stroke-width="0.8" fill="none"/><path d="M4 10.4 H12.4 V11.6 H4Z" fill="#8c8c8c"/><path d="M15.8 1.4 L18.8 1.4 L17.6 7.6 L19.8 7.4 L15.2 17.2 L15.8 10.4 L13 10.8Z" fill="#f7cf1d" stroke="#d19a12" stroke-width="0.6" stroke-linejoin="round"/><path d="M13.6 11.8 V16.6" stroke="#6a6ad8" stroke-width="1.6"/></svg><svg style="left:247.5px;top:503px" width="23" height="19" viewBox="0 0 23 19"><path d="M6.8 4.8 L15.8 14.2 M15.8 4.8 L6.8 14.2" stroke="#fb0007" stroke-width="2.7" stroke-linecap="round" fill="none"/></svg><svg style="left:811px;top:502px" width="22" height="18" viewBox="0 0 22 18"><rect x="3.4" y="1.6" width="13" height="9.6" fill="#e8e8e8"/><rect x="3.4" y="1.6" width="6.6" height="3.2" fill="#3c9a3c"/><rect x="3.4" y="4.8" width="6.6" height="3" fill="#d98c2a"/><rect x="5.4" y="3.4" width="3.6" height="2.6" fill="#e9e13a"/><rect x="10" y="1.6" width="6.4" height="9.6" fill="#c9d4c9" fill-opacity="0.8"/><path d="M10 1.6 V11.2 M13.2 1.6 V11.2 M3.4 4.8 H16.4 M3.4 8 H16.4" stroke="#fff" stroke-width="0.5" stroke-opacity="0.8"/><rect x="4.2" y="8.2" width="9" height="7.2" fill="#8b9bb4"/><rect x="4.2" y="8.2" width="4" height="7.2" fill="#c3cad6"/><path d="M11.6 10.6 L18.6 9.8 L18.2 15.6 L12.2 16.6Z" fill="#2b4a9c"/><path d="M13.6 12.4 V14.8 H15.6 M15 12 L16.8 13.4" stroke="#c9d8ff" stroke-width="0.8" fill="none"/></svg><svg style="left:1067px;top:502.1px" width="22" height="18" viewBox="0 0 22 18"><path d="M4.4 3.8 H18 L12.6 9.8 V14 L9.9 14 V9.8Z" fill="url(#fg)"/></svg><svg style="left:1092.8px;top:502.1px" width="23" height="18" viewBox="0 0 23 18"><path d="M13.6 1.8 H8 V13.8 H13.6" fill="none" stroke="#2a2a5a" stroke-width="1.2"/><path d="M10.8 7.8 H17.2 M10.8 7.8 V15.2" stroke="#e0417d" stroke-width="0.9" fill="none"/><path d="M16.4 6.4 L18.4 7.8 L16.4 9.2Z M9.6 14.2 L10.8 16.2 L12 14.2Z" fill="#e0417d"/><circle cx="10.8" cy="7.8" r="1.2" fill="#e0417d"/><text x="16" y="5.6" font-size="5.4" font-weight="700" fill="#e0417d" font-family="Liberation Sans, sans-serif">y</text><text x="12.6" y="16.6" font-size="5" font-weight="700" fill="#e0417d" font-family="Liberation Sans, sans-serif">z</text></svg><svg style="left:1119px;top:502.1px" width="22.5" height="18" viewBox="0 0 22.5 18"><text x="10.9" y="5.2" text-anchor="middle" font-size="4.8" font-weight="700" fill="#111" font-family="Liberation Sans, sans-serif">100</text><path d="M4.4 4.6 V12 M18.1 4.6 V12 M4.4 7 H18.1" stroke="#111" stroke-width="0.9" fill="none"/><path d="M4.4 7 L7 5.8 V8.2Z M18.1 7 L15.5 5.8 V8.2Z" fill="#111"/><rect x="4.2" y="13.3" width="14" height="1.7" fill="#2e2e74"/></svg><svg style="left:1145px;top:502.1px" width="34" height="18" viewBox="0 0 34 18"><rect x="4.8" y="0.6" width="9.4" height="3.6" fill="#6e6e6e"/><rect x="1.4" y="4.8" width="16" height="8.2" rx="1.2" fill="#565656"/><circle cx="15.4" cy="6.8" r="0.6" fill="#d8d8d8"/><rect x="4.3" y="10.6" width="10.2" height="5.8" fill="#fff" stroke="#565656" stroke-width="0.9"/><path d="M6.2 12.6 H12.6 M6.2 14.4 H12.6" stroke="#777" stroke-width="0.7"/><path d="M23.6 7.2 H28.8 L26.2 10.3Z" fill="#111"/></svg><svg style="left:1145px;top:546.5px" width="34" height="18.4" viewBox="0 0 34 18.4"><path d="M2 5 L7.4 2 L17 3.8 L17 13.8 L11 17 L2 14.6Z" fill="#aab5dc" fill-opacity="0.75" stroke="#7b84a8" stroke-width="0.7" stroke-linejoin="round"/><path d="M2 5 L11 6.4 L17 3.8 M11 6.4 V17 M7.4 2 V11.8 L2 14.6 M7.4 11.8 L17 13.8" fill="none" stroke="#7b84a8" stroke-width="0.6"/><path d="M24 7.6 H28.8 L26.4 10.4Z" fill="#111"/></svg><svg style="left:1145px;top:568.7px" width="34" height="18.4" viewBox="0 0 34 18.4"><path d="M3.6 3.4 H13" stroke="#e84a1c" stroke-width="1.1"/><path d="M12 1.4 L16.2 3.4 L12 5.4Z" fill="#e84a1c"/><path d="M3.6 3.4 V13" stroke="#1b3fd0" stroke-width="1.1"/><path d="M1.6 12 L3.6 16 L5.6 12Z" fill="#1b3fd0"/><circle cx="3.6" cy="3.4" r="2.4" fill="#14a84a"/><text x="8.4" y="14.6" font-size="8.6" font-weight="700" fill="#111" font-family="Liberation Sans, sans-serif" textLength="7.8" lengthAdjust="spacingAndGlyphs">-Y</text><path d="M24 7.6 H28.8 L26.4 10.4Z" fill="#111"/></svg><svg style="left:1145px;top:590.5px" width="34" height="18.4" viewBox="0 0 34 18.4"><path d="M2 3.4 L6.6 1.2 L11.6 2.2 V7.2 L17 8.4 V14.6 L7.4 17.4 L2 14.2Z" fill="#a9bfe0" stroke="#8d9bb8" stroke-width="0.6" stroke-linejoin="round"/><path d="M2 3.4 L7.4 4.8 L11.6 2.2 M7.4 4.8 V10 L11.6 7.2 M7.4 10 L17 8.4 M7.4 10 V17.4" fill="none" stroke="#8d9bb8" stroke-width="0.6"/><path d="M7.4 4.8 L11.6 2.2 V7.2 L7.4 10Z M7.4 10 L17 8.4 V14.6 L7.4 17.4Z" fill="#8ea6cf"/><path d="M24 7.6 H28.8 L26.4 10.4Z" fill="#111"/></svg><svg style="left:1145px;top:612.5px" width="34" height="18.4" viewBox="0 0 34 18.4"><text x="9.2" y="7.6" text-anchor="middle" font-size="7.6" fill="#7d84a6" font-family="Liberation Sans, sans-serif">x</text><path d="M1.8 7.6 V14.4 M16.6 7.6 V14.4 M1.8 10.2 H16.6" stroke="#7d84a6" stroke-width="0.8" fill="none"/><path d="M1.8 10.2 L4.4 9.2 V11.2Z M16.6 10.2 L14 9.2 V11.2Z" fill="#7d84a6"/><path d="M24 7.6 H28.8 L26.4 10.4Z" fill="#111"/></svg><svg style="left:1145px;top:796px" width="22" height="18" viewBox="0 0 22 18"><path d="M3.4 1.6 H8.8 M11.6 1.6 H17.4 M3.4 12.2 H17.4 M6.4 15.6 H14.4" stroke="#20209a" stroke-width="1" fill="none"/><rect x="3.4" y="7" width="14" height="3.4" fill="#d9d9d9" stroke="#8a8a8a" stroke-width="0.7"/><path d="M4.6 4.6 C6 3 9.4 2.8 11.4 3 C13.4 2.4 15 3.4 15.2 5 C15.4 6.6 14 7.8 12.6 8.6 C11.4 9.2 9.8 8.8 9.4 7.6 C8.6 6.2 6.8 5.6 4.6 4.6Z" fill="#e6c09a"/><path d="M15 3 L17.6 2.2 L18.6 6.4 L15.6 6.6Z" fill="#5b7fd6"/></svg><svg style="left:1145px;top:818px" width="22" height="18" viewBox="0 0 22 18"><circle cx="8.8" cy="8" r="4.2" fill="none" stroke="#555" stroke-width="1.9"/><path d="M11.8 11 L17.4 15.4" stroke="#555" stroke-width="2.2" stroke-linecap="round"/><path d="M11.4 2.2 L17.6 8.4 M17.6 2.2 L11.4 8.4" stroke="#f0141e" stroke-width="1.9" fill="none"/></svg><svg style="left:11px;top:867.2px" width="23" height="18.6" viewBox="0 0 23 18.6"><rect x="3.9" y="1.6" width="15.8" height="3.2" fill="#8fd468"/><path d="M6 1.6 V3 M8.2 1.6 V3 M10.4 1.6 V3 M12.6 1.6 V3 M14.8 1.6 V3 M17 1.6 V3" stroke="#b9e8a0" stroke-width="0.6"/><text x="3.4" y="14.2" font-size="9.4" font-weight="700" fill="#111" font-family="Liberation Sans, sans-serif" textLength="7.6" lengthAdjust="spacingAndGlyphs">0.</text><text x="11" y="14.2" font-size="9.4" fill="#26268c" font-family="Liberation Sans, sans-serif" textLength="9.2" lengthAdjust="spacingAndGlyphs">00</text><path d="M11 15.4 H20.2" stroke="#26268c" stroke-width="0.9"/></svg><svg style="left:44px;top:867.2px" width="23" height="18.6" viewBox="0 0 23 18.6"><rect x="3.9" y="1.8" width="3" height="2.6" fill="#ee1c1c"/><rect x="6.9" y="1.8" width="3" height="2.6" fill="#f3e51b"/><rect x="3.9" y="4.4" width="3" height="2.6" fill="#19c819"/><rect x="6.9" y="4.4" width="3" height="2.6" fill="#3a5be8"/><text x="6.6" y="14.2" text-anchor="middle" font-size="8.6" font-weight="700" fill="#111" font-family="Liberation Sans, sans-serif">A</text><path d="M4 15.6 H5 M6.2 15.6 H7.4 M8.4 15.6 H9.6" stroke="#111" stroke-width="0.9"/><rect x="10.6" y="6.2" width="8.6" height="6.6" fill="url(#wg)" stroke="#777" stroke-width="0.8"/><rect x="11" y="6.6" width="7.8" height="1.7" fill="#3c4fb4"/></svg><svg style="left:76.7px;top:867.2px" width="23" height="18.6" viewBox="0 0 23 18.6"><rect x="3.4" y="2" width="16.2" height="12" fill="#d9e6f2" stroke="#8a8a8a" stroke-width="0.8"/><path d="M5 7.8 L11.6 3.4 L18.2 7.2 C16 8.8 15.4 10.6 15 12.4 C12 9.4 8.4 8.4 5 7.8Z" fill="#3f78c4"/><path d="M8.2 5.8 L15 10 M11.6 3.4 L11.8 9.2" stroke="#9fc2ea" stroke-width="0.5" fill="none"/><path d="M11.5 14 V16.4 M8 16.6 H15" stroke="#8a8a8a" stroke-width="0.9"/></svg><svg style="left:109.3px;top:867.2px" width="23" height="18.6" viewBox="0 0 23 18.6"><path d="M4 8.2 H8.4 L10.4 10.2 V16.8 H4Z" fill="#f1f1f1" stroke="#666" stroke-width="0.8"/><path d="M5.4 11.4 H9 M5.4 13 H9 M5.4 14.6 H9" stroke="#777" stroke-width="0.6"/><path d="M11.2 4.6 L18.2 11.4 L15 11.6 L16.8 15.4 L15.2 16.2 L13.5 12.4 L11.2 14.6Z" fill="#fff" stroke="#8a8a8a" stroke-width="0.7" stroke-linejoin="round"/><path d="M7.6 1.6 L12.8 6.2 M12.8 1.6 L7.6 6.2" stroke="#ee1c24" stroke-width="1.3" fill="none"/></svg><svg style="left:142.2px;top:867.2px" width="23" height="18.6" viewBox="0 0 23 18.6"><text x="2.6" y="15" font-size="13.5" font-style="italic" fill="#111" font-family="Liberation Serif, serif" textLength="13" lengthAdjust="spacingAndGlyphs">fx</text><path d="M10.2 4.4 C12 1.4 17.4 1.4 19.4 4.4 C17.4 7.2 12 7.2 10.2 4.4Z" fill="#fff" stroke="#26268c" stroke-width="0.9"/><circle cx="14.8" cy="4.4" r="1.7" fill="#26268c"/></svg><svg style="left:1060px;top:550px" width="70" height="62" viewBox="0 0 70 62"><rect x="11.0" y="8.3" width="11.6" height="10.8" rx="1.3" fill="#fff" stroke="#1e1e1e" stroke-width="1.1"/><rect x="11.0" y="19.7" width="11.6" height="22.3" rx="1.3" fill="#fff" stroke="#1e1e1e" stroke-width="1.1"/><rect x="11.0" y="42.6" width="11.6" height="11.4" rx="1.3" fill="#fff" stroke="#1e1e1e" stroke-width="1.1"/><rect x="23.2" y="8.3" width="21.9" height="10.8" rx="1.3" fill="#fff" stroke="#1e1e1e" stroke-width="1.1"/><rect x="23.2" y="19.7" width="21.9" height="22.3" rx="1.3" fill="#fff" stroke="#1e1e1e" stroke-width="1.1"/><rect x="23.2" y="42.6" width="21.9" height="11.4" rx="1.3" fill="#fff" stroke="#1e1e1e" stroke-width="1.1"/><rect x="45.7" y="8.3" width="11.5" height="10.8" rx="1.3" fill="#fff" stroke="#1e1e1e" stroke-width="1.1"/><rect x="45.7" y="19.7" width="11.5" height="22.3" rx="1.3" fill="#fff" stroke="#1e1e1e" stroke-width="1.1"/><rect x="45.7" y="42.6" width="11.5" height="11.4" rx="1.3" fill="#fff" stroke="#1e1e1e" stroke-width="1.1"/><text x="34.299999999999955" y="36.299999999999955" text-anchor="middle" font-size="10.8" style="font-weight:bold" stroke="#8585ff" stroke-width="0.35" fill="#8585ff" font-family="Liberation Sans, sans-serif">+Z</text></svg></div></div></body></html>
